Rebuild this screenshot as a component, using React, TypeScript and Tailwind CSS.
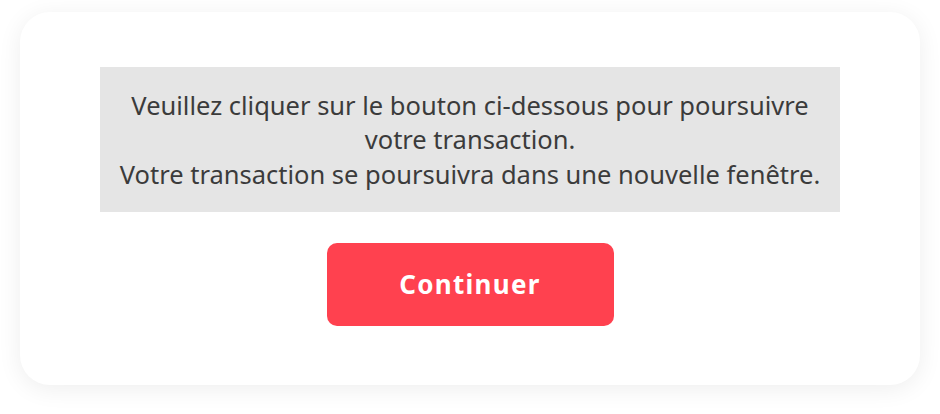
export default function App() {
  return (
    <div className="h-[414px] w-[940px] bg-white pl-5 pt-3 font-['Noto_Sans',sans-serif]">
      <div className="flex h-[373px] w-[900px] flex-col items-center rounded-[30px] bg-white pt-[55px] shadow-[0_4px_24px_rgba(0,0,0,0.07)]">
        <div className="flex h-[145px] w-[740px] flex-col items-center justify-center bg-[#e5e5e5] text-center text-[25.5px] leading-[34.5px] text-[#3b3b3b]">
          <p>Veuillez cliquer sur le bouton ci-dessous pour poursuivre</p>
          <p>votre transaction.</p>
          <p>Votre transaction se poursuivra dans une nouvelle fenêtre.</p>
        </div>
        <button className="mt-[31px] flex h-[83px] w-[287px] items-center justify-center rounded-[10px] bg-[#ff414f] text-[26px] font-bold tracking-[1.3px] text-white">
          Continuer
        </button>
      </div>
    </div>
  );
}
